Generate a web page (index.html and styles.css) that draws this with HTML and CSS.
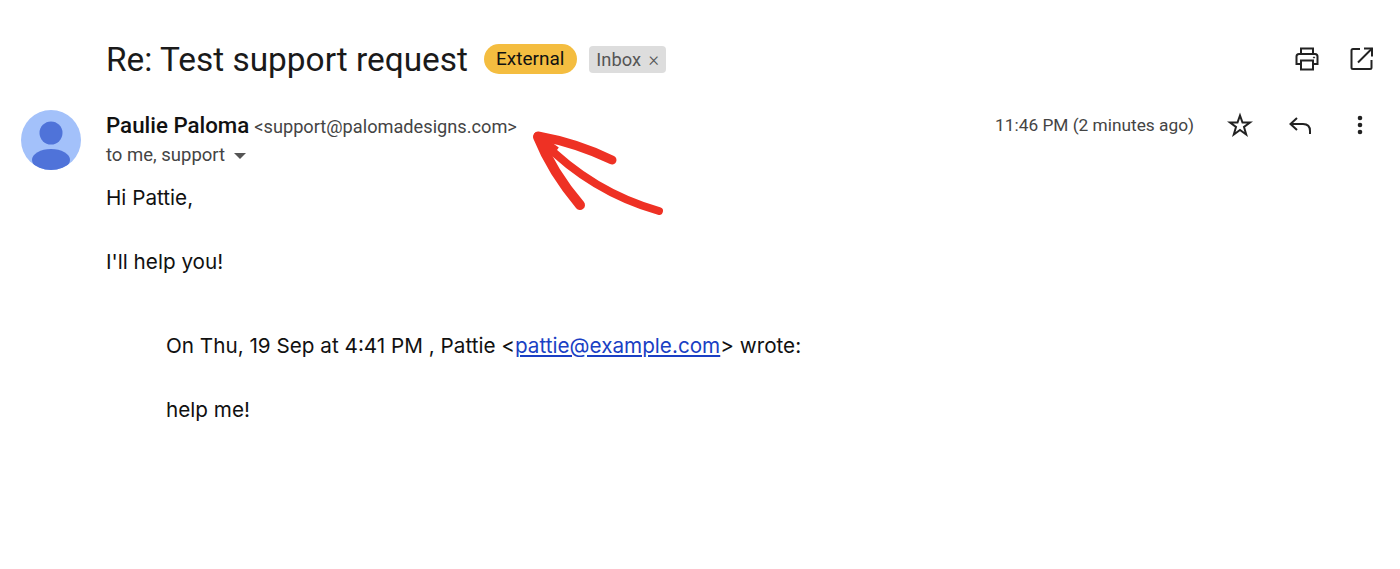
FILE: index.html
```html
<!DOCTYPE html>
<html lang="en">
  <head>
    <meta charset="utf-8" />
    <link rel="stylesheet" href="styles.css">
    <title>Re: Test support request</title>
  </head>

  <body>
    <div class="subject-row">
      <h2>Re: Test support request</h2>
      <span class="label-external">External</span>
      <span class="label-inbox">Inbox <span class="label-x">×</span></span>
      <div class="top-icons">
        <svg width="26" height="26" viewBox="0 0 26 26" fill="none" stroke="#222" stroke-width="2">
          <path d="M7 8V2.500H19V8"/>
          <path d="M7 18H2.500V10.500Q2.500 8 5 8H21Q23.500 8 23.500 10.500V18H19"/>
          <path d="M7 14.500H19V23.500H7Z"/>
          <circle cx="20" cy="11.500" r="0.600" fill="#222" stroke-width="1"/>
        </svg>
        <svg width="24" height="24" viewBox="0 0 24 24" fill="none" stroke="#222" stroke-width="2">
          <path d="M10 2H3Q1.500 2 1.500 3.500V20.500Q1.500 22 3 22H20Q21.500 22 21.500 20.500V13"/>
          <path d="M14 1.500H22V9.500"/>
          <path d="M22 1.500L8 15.500"/>
        </svg>
      </div>
    </div>

    <div class="message">
      <svg class="avatar" width="60" height="60" viewBox="0 0 60 60">
        <defs><clipPath id="avatar-clip"><circle cx="30" cy="30" r="30"/></clipPath></defs>
        <circle cx="30" cy="30" r="30" fill="#a3c1fa"/>
        <circle cx="30" cy="23" r="11.500" fill="#4f73d9"/>
        <ellipse cx="30" cy="50" rx="19" ry="11" fill="#4f73d9" clip-path="url(#avatar-clip)"/>
      </svg>
      <div class="message-main">
        <div class="sender-row">
          <div>
            <b class="sender">Paulie Paloma</b>
            <span class="address">&lt;support@palomadesigns.com&gt;</span>
          </div>
          <div class="meta">
            <span class="time">11:46 PM (2 minutes ago)</span>
            <span class="icon-slot">
              <svg width="26" height="26" viewBox="0 0 26 26" fill="none" stroke="#222" stroke-width="2">
                <path d="M13 3.500L15.500 10.500H23L17 15L19.200 22.500L13 18L6.800 22.500L9 15L3 10.500H10.500Z"/>
              </svg>
            </span>
            <span class="icon-slot">
              <svg width="24" height="24" viewBox="0 0 24 24" fill="none" stroke="#222" stroke-width="2">
                <path d="M9 5L2.500 11L9 17"/>
                <path d="M2.500 11H15Q22 11 22 18V21"/>
              </svg>
            </span>
            <span class="icon-slot">
              <svg width="6" height="20" viewBox="0 0 6 20" fill="#222">
                <circle cx="3" cy="3" r="2.300"/>
                <circle cx="3" cy="10" r="2.300"/>
                <circle cx="3" cy="17" r="2.300"/>
              </svg>
            </span>
          </div>
        </div>
        <div class="to-row">to me, support <span class="caret"></span></div>
        <div class="body-text">
          <p>Hi Pattie,</p>
          <p>I'll help you!</p>
          <div class="quoted">
            <p>On Thu, 19 Sep at 4:41 PM , Pattie &lt;<a href="#">pattie@example.com</a>&gt; wrote:</p>
            <p>help me!</p>
          </div>
        </div>
      </div>
    </div>

    <svg class="arrow" width="1400" height="569" viewBox="0 0 1400 569" fill="none" stroke="#ee3124" stroke-linecap="round">
      <path d="M539 136L556 148L551 155Z" fill="#ee3124" stroke-width="4"/>
      <path stroke-width="9" d="M538 136Q577 143 612 160"/>
      <path stroke-width="10" d="M538 137Q552 172 580 205"/>
      <path stroke-width="8" d="M542 141Q592 192 659 211"/>
    </svg>
  </body>
</html>
```

FILE: styles.css
```css
html,
body {
  height: 100%;
}

body {
  background-color: #fff;
  color: #111;
  margin: 0;
  overflow: hidden;
  font-family: Roboto, "Liberation Sans", sans-serif;
}

h2 {
  margin: 0 16px 0 0;
  font-size: 33.400px;
  font-weight: 400;
  color: #1a1a1a;
}

.subject-row {
  display: flex;
  align-items: center;
  height: 38px;
  padding: 40px 26px 0 106px;
}

.label-external {
  background: #f4bd40;
  border-radius: 15px;
  padding: 0 13px 0 12px;
  height: 30px;
  line-height: 30px;
  font-size: 19px;
  margin-right: 12px;
}

.label-inbox {
  background: #dddddd;
  color: #555;
  border-radius: 4px;
  padding: 0 7px;
  height: 27px;
  line-height: 27px;
  font-size: 18.300px;
}

.label-x {
  color: #555;
  margin-left: 3px;
  font-size: 20px;
  line-height: 20px;
  font-weight: 300;
}

.top-icons {
  margin-left: auto;
  display: flex;
  align-items: center;
  gap: 30px;
}

.message {
  display: flex;
  padding: 32px 0 0 21px;
}

.avatar {
  flex: none;
  margin-right: 25px;
}

.message-main {
  flex: 1;
}

.sender-row {
  display: flex;
  justify-content: space-between;
  align-items: center;
  height: 30px;
  padding-right: 10px;
}

.sender {
  font-size: 22.300px;
  font-weight: 500;
}

.address {
  font-size: 18.200px;
  color: #444;
  margin-left: 1px;
}

.meta {
  display: flex;
  align-items: center;
}

.time {
  font-size: 17.300px;
  color: #444;
  margin-right: 16px;
}

.icon-slot {
  display: flex;
  justify-content: center;
  width: 60px;
}

.to-row {
  margin-top: 5px;
  font-size: 18.500px;
  line-height: 20px;
  color: #444;
}

.caret {
  display: inline-block;
  width: 0;
  height: 0;
  margin: 0 0 2px 4px;
  border-left: 6px solid transparent;
  border-right: 6px solid transparent;
  border-top: 6px solid #555;
}

.body-text {
  margin-top: 21px;
  font-family: Inter, "Liberation Sans", sans-serif;
  font-size: 20.700px;
}

.body-text p {
  margin: 0 0 40px;
  line-height: 24px;
}

.quoted {
  padding: 20px 0 0 60px;
}

a {
  color: #1a3fc4;
}

.arrow {
  position: absolute;
  left: 0;
  top: 0;
}
```
